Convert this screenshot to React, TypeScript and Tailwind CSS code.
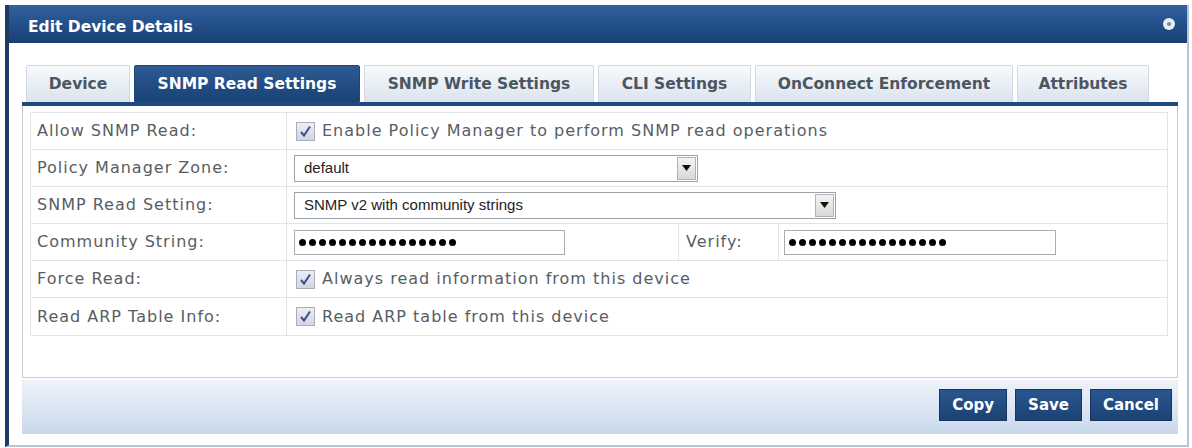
import React from 'react'

const labelFont = { fontFamily: '"DejaVu Sans", Verdana, sans-serif' }

const tabs = [
  { name: 'Device', w: 'w-[104px]' },
  { name: 'SNMP Read Settings', w: 'w-[226px]', active: true },
  { name: 'SNMP Write Settings', w: 'w-[230px]' },
  { name: 'CLI Settings', w: 'w-[153px]' },
  { name: 'OnConnect Enforcement', w: 'w-[258px]' },
  { name: 'Attributes', w: 'w-[132px]' },
]

const Check = () => (
  <span className="flex h-[19px] w-[19px] items-center justify-center border border-[#a9adbb] bg-gradient-to-b from-[#eceef3] to-[#d3d6df]">
    <svg width="13" height="13" viewBox="0 0 13 13">
      <path d="M2 7 L5 10.5 L11 1.5" fill="none" stroke="#3d4f92" strokeWidth="2" />
    </svg>
  </span>
)

const Dots = () => (
  <div className="flex gap-[3px] pl-[4px]">
    {Array.from({ length: 16 }).map((_, i) => (
      <span key={i} className="h-[7px] w-[7px] rounded-full bg-black" />
    ))}
  </div>
)

const Select = ({ value, w }: { value: string; w: string }) => (
  <div className={`flex h-[27px] items-center justify-between border border-[#9ea3a9] bg-white ${w}`}>
    <span className="pl-[9px] text-[15px] text-[#222]" style={{ fontFamily: '"Liberation Sans", Arial, sans-serif' }}>
      {value}
    </span>
    <span className="mr-[1px] flex h-[23px] w-[19px] items-center justify-center border border-[#b0b4ba] bg-gradient-to-b from-[#f4f4f4] to-[#d8d8d8]">
      <svg width="9" height="6" viewBox="0 0 9 6">
        <path d="M0 0 H9 L4.5 6 Z" fill="#111" />
      </svg>
    </span>
  </div>
)

const Row = ({ label, children, last }: { label: string; children: React.ReactNode; last?: boolean }) => (
  <div className={`flex h-[37px] ${last ? '' : 'border-b border-[#e0e4e9]'}`}>
    <div className="flex w-[256px] shrink-0 items-center border-r border-[#e0e4e9] pl-[6px] text-[16px] tracking-[1px] text-[#585d63]" style={labelFont}>
      {label}
    </div>
    <div className="flex flex-1 items-center">{children}</div>
  </div>
)

const CheckText = ({ text }: { text: string }) => (
  <div className="flex items-center gap-[7px] pl-[9px] text-[16px] tracking-[1px] text-[#585d63]" style={labelFont}>
    <Check />
    <span>{text}</span>
  </div>
)

export default function App() {
  return (
    <div className="h-[448px] w-[1192px] bg-white pl-[5px] pt-[5px]">
      <div className="flex h-[442px] w-[1184px] flex-col border-b-2 border-l-4 border-r-2 border-[#b5c4d6] border-l-[#1c3b64] bg-white">
        {/* title bar */}
        <div className="flex h-[38px] shrink-0 items-center justify-between bg-gradient-to-b from-[#32619b] via-[#23508a] to-[#1a4072] pl-[19px] pr-[12px]">
          <span className="pt-[8px] text-[15.5px] font-bold text-white" style={labelFont}>
            Edit Device Details
          </span>
          <span className="flex h-[12px] w-[12px] items-center justify-center rounded-full bg-[#e8edf3]">
            <span className="h-[4px] w-[4px] rounded-full bg-[#7d8796]" />
          </span>
        </div>

        <div className="flex flex-1 flex-col pl-[13px] pr-[9px] pt-[22px]">
          {/* tabs */}
          <div className="flex h-[37px] gap-[4px] pl-[4px]">
            {tabs.map((t) => (
              <div
                key={t.name}
                className={`flex items-center justify-center rounded-t-[2px] border pt-[2px] text-[15.5px] font-bold ${t.w} ${
                  t.active
                    ? 'border-[#1d4678] bg-gradient-to-b from-[#2d5b94] to-[#1a4274] text-white'
                    : 'border-[#d2d9e3] border-b-0 bg-gradient-to-b from-[#f8fafd] to-[#dbe3ee] text-[#4c5662]'
                }`}
                style={labelFont}
              >
                {t.name}
              </div>
            ))}
          </div>
          <div className="h-[4px] bg-[#1f4a7f]" />

          {/* panel */}
          <div className="h-[272px] border border-t-0 border-[#c9cdd3] pl-[7px] pr-[9px] pt-[6px]">
            <div className="border border-[#e0e4e9]">
              <Row label="Allow SNMP Read:">
                <CheckText text="Enable Policy Manager to perform SNMP read operations" />
              </Row>
              <Row label="Policy Manager Zone:">
                <div className="pl-[7px]">
                  <Select value="default" w="w-[404px]" />
                </div>
              </Row>
              <Row label="SNMP Read Setting:">
                <div className="pl-[7px]">
                  <Select value="SNMP v2 with community strings" w="w-[542px]" />
                </div>
              </Row>
              <Row label="Community String:">
                <div className="flex h-full w-[391px] items-center pl-[7px]">
                  <div className="flex h-[25px] w-[271px] items-center border border-[#a9adb3] bg-white">
                    <Dots />
                  </div>
                </div>
                <div className="flex h-full w-[100px] items-center border-l border-[#e0e4e9] pl-[7px] text-[16px] tracking-[1px] text-[#585d63]" style={labelFont}>
                  Verify:
                </div>
                <div className="flex h-full flex-1 items-center border-l border-[#e0e4e9] pl-[5px]">
                  <div className="flex h-[25px] w-[272px] items-center border border-[#a9adb3] bg-white">
                    <Dots />
                  </div>
                </div>
              </Row>
              <Row label="Force Read:">
                <CheckText text="Always read information from this device" />
              </Row>
              <Row label="Read ARP Table Info:" last>
                <CheckText text="Read ARP table from this device" />
              </Row>
            </div>
          </div>

          {/* footer */}
          <div className="mt-[2px] flex h-[54px] items-start justify-end gap-[8px] bg-gradient-to-b from-[#eef2f9] via-[#dce6f2] to-[#c8d9ec] pr-[6px] pt-[9px]">
            {['Copy', 'Save', 'Cancel'].map((b) => (
              <button
                key={b}
                className="h-[32px] border border-[#16365f] bg-gradient-to-b from-[#2a5690] to-[#1b4273] px-[12px] text-[15px] font-bold text-white"
                style={labelFont}
              >
                {b}
              </button>
            ))}
          </div>
        </div>
      </div>
    </div>
  )
}
